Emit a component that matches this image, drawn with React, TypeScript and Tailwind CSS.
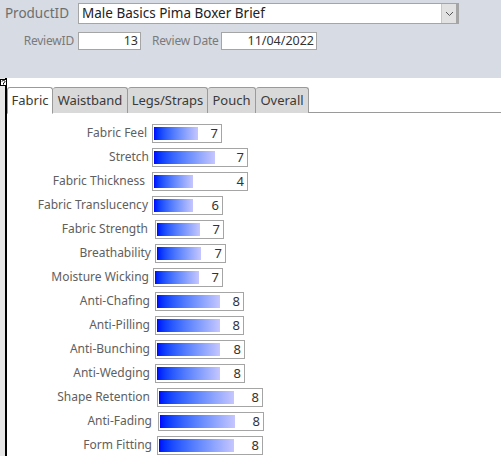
import React from 'react';

type Row = {
  label: string;
  value: number;
  labelCls: string;
  boxCls: string;
  barCls: string;
};

// label width ends where the label text ends; box margin/width/bar width copied per row
const rows: Row[] = [
  { label: 'Fabric Feel', value: 7, labelCls: 'w-[140px]', boxCls: 'ml-[5px] w-[70px]', barCls: 'w-[44px]' },
  { label: 'Stretch', value: 7, labelCls: 'w-[142px]', boxCls: 'ml-[3px] w-[96px]', barCls: 'w-[61px]' },
  { label: 'Fabric Thickness', value: 4, labelCls: 'w-[138px]', boxCls: 'ml-[7px] w-[96px]', barCls: 'w-[39px]' },
  { label: 'Fabric Translucency', value: 6, labelCls: 'w-[141px]', boxCls: 'ml-[4px] w-[71px]', barCls: 'w-[39px]' },
  { label: 'Fabric Strength', value: 7, labelCls: 'w-[141px]', boxCls: 'ml-[7px] w-[69px]', barCls: 'w-[43px]' },
  { label: 'Breathability', value: 7, labelCls: 'w-[144px]', boxCls: 'ml-[4px] w-[71px]', barCls: 'w-[44px]' },
  { label: 'Moisture Wicking', value: 7, labelCls: 'w-[142px]', boxCls: 'ml-[4px] w-[70px]', barCls: 'w-[44px]' },
  { label: 'Anti-Chafing', value: 8, labelCls: 'w-[143px]', boxCls: 'ml-[5px] w-[89px]', barCls: 'w-[63px]' },
  { label: 'Anti-Pilling', value: 8, labelCls: 'w-[143px]', boxCls: 'ml-[5px] w-[89px]', barCls: 'w-[63px]' },
  { label: 'Anti-Bunching', value: 8, labelCls: 'w-[143px]', boxCls: 'ml-[5px] w-[90px]', barCls: 'w-[63px]' },
  { label: 'Anti-Wedging', value: 8, labelCls: 'w-[143px]', boxCls: 'ml-[5px] w-[90px]', barCls: 'w-[63px]' },
  { label: 'Shape Retention', value: 8, labelCls: 'w-[143px]', boxCls: 'ml-[7px] w-[106px]', barCls: 'w-[75px]' },
  { label: 'Anti-Fading', value: 8, labelCls: 'w-[145px]', boxCls: 'ml-[6px] w-[106px]', barCls: 'w-[75px]' },
  { label: 'Form Fitting', value: 8, labelCls: 'w-[145px]', boxCls: 'ml-[5px] w-[106px]', barCls: 'w-[75px]' },
];

const tabs = [
  { name: 'Fabric', cls: 'w-[46px]' },
  { name: 'Waistband', cls: 'w-[75px]' },
  { name: 'Legs/Straps', cls: 'w-[80px]' },
  { name: 'Pouch', cls: 'w-[48px]' },
  { name: 'Overall', cls: 'w-[53px]' },
];

const font = "font-['Segoe_UI','Noto_Sans',sans-serif]";

export default function App() {
  return (
    <div className={`w-[501px] h-[456px] overflow-hidden bg-white ${font}`}>
      {/* Header */}
      <div className="h-[78px] bg-[#d6dbe4] pt-[3px]">
        <div className="flex items-center h-[21px]">
          <span className="w-[69px] text-right text-[13.5px] text-[#6e6e6e] leading-none">ProductID</span>
          <div className="ml-[9px] w-[381px] h-[21px] bg-white border border-[#a5a5a5] flex">
            <span className="flex-1 pl-[3px] text-[13.5px] text-[#222] leading-[19px]">
              Male Basics Pima Boxer Brief
            </span>
            <div className="w-[17px] h-full bg-[#e2e2e2] border-l border-[#c8c8c8] border-r-2 border-r-[#a5a5a5] flex items-center justify-center">
              <svg width="9" height="6" viewBox="0 0 9 6">
                <path d="M1 1 L4.5 4.5 L8 1" fill="none" stroke="#555" strokeWidth="1" />
              </svg>
            </div>
          </div>
        </div>
        <div className="flex items-center mt-[8px] h-[18px]">
          <span className="w-[74px] text-right text-[12px] tracking-[-0.2px] text-[#7a7a7a] leading-none">ReviewID</span>
          <div className="ml-[4px] w-[63px] h-[18px] bg-white border border-[#a5a5a5] text-right pr-[2px] text-[12.5px] text-[#333] leading-[16px]">
            13
          </div>
          <span className="ml-[11px] w-[66px] text-[12px] tracking-[-0.2px] text-[#7a7a7a] leading-none whitespace-nowrap">Review Date</span>
          <div className="ml-[3px] w-[96px] h-[18px] bg-white border border-[#a5a5a5] text-right pr-[2px] text-[12.5px] text-[#333] leading-[16px]">
            11/04/2022
          </div>
        </div>
      </div>

      {/* Body */}
      <div className="relative flex h-[378px]">
        <div className="absolute left-0 top-[1px] w-[7px] h-[7px] bg-white border border-black flex items-center justify-center">
          <svg width="5" height="5" viewBox="0 0 5 5">
            <path d="M1 1.5 Q1 0.5 2.5 0.5 Q4 0.5 4 1.5 Q4 2.5 2.5 3 L2.5 4.5" fill="none" stroke="#000" strokeWidth="1" />
          </svg>
        </div>
        <div className="w-[5px] bg-[#e6e6e6]" />
        <div className="w-[2px] bg-black" />
        <div className="flex-1 pt-[9px]">
          {/* Tabs */}
          <div className="flex h-[26px] border-b border-[#9a9a9a]">
            {tabs.map((t, i) => (
              <div
                key={t.name}
                className={`${t.cls} h-[26px] flex items-center justify-center text-[13px] text-[#3a3a3a] border border-[#9a9a9a] rounded-t-[3px] ${
                  i === 0 ? 'bg-white border-b-white h-[27px]' : 'bg-[#d9d9d9] border-l-0 border-b-0'
                }`}
              >
                {t.name}
              </div>
            ))}
          </div>

          {/* Rating rows */}
          <div className="pt-[8px] flex flex-col">
            {rows.map(r => (
              <div key={r.label} className="flex items-center h-[24px]">
                <span className={`${r.labelCls} text-right text-[12px] text-[#606060] leading-none whitespace-nowrap`}>
                  {r.label}
                </span>
                <div className={`${r.boxCls} h-[19px] border border-[#a5a5a5] bg-white relative px-[1px] py-[2px] flex`}>
                  <div className={`${r.barCls} h-full bg-linear-to-r from-[#0000ff] to-[#c6c6ff]`} />
                  <span className="absolute right-[3px] top-0 text-[13px] text-[#333] leading-[17px]">{r.value}</span>
                </div>
              </div>
            ))}
          </div>
        </div>
      </div>
    </div>
  );
}
